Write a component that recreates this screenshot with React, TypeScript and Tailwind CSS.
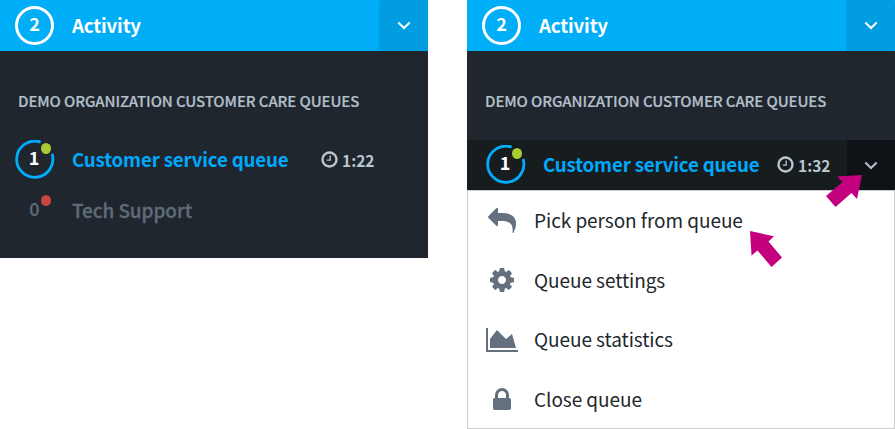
import type { ReactNode } from "react";

function Chevron() {
  return (
    <svg className="-mt-px" width="14" height="10" viewBox="0 0 14 10" fill="none" stroke="currentColor" strokeWidth="2">
      <path d="M1.3 2.5 L7 8 L12.7 2.5" />
    </svg>
  );
}

function Glyph({ d, wide }: { d: string; wide?: boolean }) {
  return (
    <svg className="h-7 shrink-0" width={wide ? 32 : 28} viewBox={wide ? "0 0 2048 1792" : "0 0 1792 1792"} fill="currentColor">
      <path d={d} />
    </svg>
  );
}

const clockPath =
  "M1024 544v448q0 14-9 23t-23 9h-320q-14 0-23-9t-9-23v-64q0-14 9-23t23-9h224v-352q0-14 9-23t23-9h64q14 0 23 9t9 23zm416 352q0-148-73-273t-198-198-273-73-273 73-198 198-73 273 73 273 198 198 273 73 273-73 198-198 73-273zm224 0q0 209-103 385.5t-279.5 279.5-385.5 103-385.5-103-279.5-279.5-103-385.5 103-385.5 279.5-279.5 385.5-103 385.5 103 279.5 279.5 103 385.5z";
const replyPath =
  "M1792 1120q0 166-127 451-3 7-10.5 24t-13.5 30-13 22q-12 17-28 17-15 0-23.5-10t-8.5-25q0-9 2.5-26.5t2.5-23.5q5-68 5-123C1576 1050 1340 896 864 896H640V1152q0 26-19 45t-45 19-45-19l-512-512q-19-19-19-45t19-45l512-512q19-19 45-19t45 19 19 45v256h224q713 0 875 403 53 134 53 333z";
const cogPath =
  "M1152 896q0-106-75-181t-181-75-181 75-75 181 75 181 181 75 181-75 75-181zm512-109v222q0 12-8 23t-20 13l-185 28q-19 54-39 91 35 50 107 138 10 12 10 25t-9 23q-27 37-99 108t-94 71q-12 0-26-9l-138-108q-44 23-91 38-16 136-29 186-7 28-36 28h-222q-14 0-24.5-8.5t-11.5-21.5l-28-184q-49-16-90-37l-141 107q-10 9-25 9-14 0-25-11-126-114-165-168-7-10-7-23 0-12 8-23 15-21 51-66.5t54-70.5q-27-50-41-99l-183-27q-13-2-21-12.5t-8-23.5v-222q0-12 8-23t19-13l186-28q14-46 39-92-40-57-107-138-10-12-10-24 0-10 9-23 26-36 98.5-107.5t94.5-71.5q13 0 26 10l138 107q44-23 91-38 16-136 29-186 7-28 36-28h222q14 0 24.5 8.5t11.5 21.5l28 184q49 16 90 37l142-107q9-9 24-9 13 0 25 10 129 119 165 170 7 8 7 22 0 12-8 23-15 21-51 66.5t-54 70.5q26 50 41 98l183 28q13 2 21 12.5t8 23.5z";
const chartPath = "M2048 1536v128h-2048v-1536h128v1408h1920zm-384-1024l256 896h-1664v-576l448-576 576 576z";
const lockPath =
  "M640 768h512v-192q0-106-75-181t-181-75-181 75-75 181v192zm832 96v576q0 40-28 68t-68 28h-960q-40 0-68-28t-28-68v-576q0-40 28-68t68-28h32v-192q0-184 132-316t316-132 316 132 132 316v192h32q40 0 68 28t28 68z";

function Header() {
  return (
    <header className="flex h-[51px] bg-[#00adf7] text-white">
      <div className="flex flex-1 items-center pl-[15px]">
        <span className="flex size-[39px] items-center justify-center rounded-full border-3 border-white pb-[5px] text-[18px] leading-[20px] font-bold">2</span>
        <h2 className="ml-[18px] pb-[2px] text-[18.7px] leading-[24px] font-bold tracking-[-0.16px]">Activity</h2>
      </div>
      <button className="flex w-[49px] items-center justify-center rounded-[3px] bg-[#009de1]">
        <Chevron />
      </button>
    </header>
  );
}

function GroupTitle() {
  return (
    <h3 className="h-[39px] pl-[18px] text-[15px] leading-[20px] font-medium tracking-[-0.11px] whitespace-nowrap text-[#b3bfc9] [-webkit-text-stroke:0.2px_currentColor]">
      DEMO ORGANIZATION CUSTOMER CARE QUEUES
    </h3>
  );
}

function CountRing() {
  return (
    <span className="relative flex size-[40px] shrink-0 items-center justify-center pr-[2px] pb-[6px] text-[18px] leading-[20px] font-bold text-white">
      <svg className="absolute inset-0" width="40" height="40" viewBox="0 0 40 40" fill="none">
        <path d="M25.6 2.1 A18.1 18.1 0 1 0 37.1 14" stroke="#00adfb" strokeWidth="2.8" />
        <ellipse cx="31" cy="8.5" rx="5" ry="5.5" fill="#a9cb36" />
      </svg>
      <span className="relative">1</span>
    </span>
  );
}

function QueueName() {
  return (
    <span className="ml-[17px] w-[216px] pb-[2px] text-[18.7px] leading-[24px] font-bold tracking-[-0.17px] whitespace-nowrap text-[#00a9fa]">
      Customer service queue
    </span>
  );
}

function Wait({ time }: { time: string }) {
  return (
    <span className="flex items-center gap-[3px] pb-px text-[15.5px] leading-[20px] font-bold text-[#bac5ce]">
      <svg width="19" height="19" viewBox="0 0 1792 1792" fill="currentColor">
        <path d={clockPath} />
      </svg>
      {time}
    </span>
  );
}

function MenuItem({ icon, label }: { icon: ReactNode; label: string }) {
  return (
    <li className="flex h-[59.6px] items-center">
      <span className="ml-[18px] flex w-8 justify-center text-[#647080]">{icon}</span>
      <span className="ml-[16px] pb-px text-[19px] leading-[28px] tracking-[-0.06px] whitespace-nowrap text-[#22272b]">{label}</span>
    </li>
  );
}

export default function App() {
  return (
    <main className="relative flex h-[429px] w-[895px] items-start gap-[39px] overflow-hidden bg-white font-['Noto_Sans_CJK_SC','Noto_Sans',sans-serif]">
      <section className="h-[258px] w-[428px] bg-[#1f262e]">
        <Header />
        <div className="pt-[40px]">
          <GroupTitle />
        </div>
        <div className="flex h-[60px] items-center pl-[15px]">
          <CountRing />
          <QueueName />
          <span className="ml-[32px]">
            <Wait time="1:22" />
          </span>
        </div>
        <div className="flex h-[42px] items-center pl-[15px] text-[#606b78]">
          <span className="relative w-[39px] pb-[6px] text-center text-[18px] leading-[22px] font-medium [-webkit-text-stroke:0.2px_currentColor]">
            0
            <i className="absolute -top-[2px] left-[26px] h-[11px] w-[10px] rounded-[50%] bg-[#ca4343]" />
          </span>
          <span className="ml-[18px] pb-[2px] text-[19px] leading-[24px] font-medium tracking-[-0.08px] [-webkit-text-stroke:0.3px_currentColor]">Tech Support</span>
        </div>
      </section>

      <section className="h-[429px] w-[428px] bg-[#1f262e]">
        <Header />
        <div className="pt-[40px]">
          <GroupTitle />
        </div>
        <div className="mt-[10px] flex h-[50px] items-center bg-[#171c1f] pl-[19px]">
          <CountRing />
          <QueueName />
          <span className="ml-[17px]">
            <Wait time="1:32" />
          </span>
          <button className="ml-auto flex h-full w-[48px] items-center justify-center bg-[#0f1216] text-[#b5c0c8]">
            <Chevron />
          </button>
        </div>
        <ul className="h-[239px] border border-[#cdcdcd] bg-white">
          <MenuItem icon={<Glyph d={replyPath} />} label="Pick person from queue" />
          <MenuItem icon={<Glyph d={cogPath} />} label="Queue settings" />
          <MenuItem icon={<Glyph d={chartPath} wide />} label="Queue statistics" />
          <MenuItem icon={<Glyph d={lockPath} />} label="Close queue" />
        </ul>
      </section>

      <svg className="absolute inset-0" width="895" height="429" viewBox="0 0 895 429" fill="#c5007f">
        <path d="M862 175 L857 199 L851.5 193 L835.5 207 L826 196 L842.5 182 L837 176.5 Z" />
        <path d="M750 231 L774 236.3 L768.5 241.5 L782 257.5 L771.5 267 L757.5 250.5 L751.5 255.5 Z" />
      </svg>
    </main>
  );
}
